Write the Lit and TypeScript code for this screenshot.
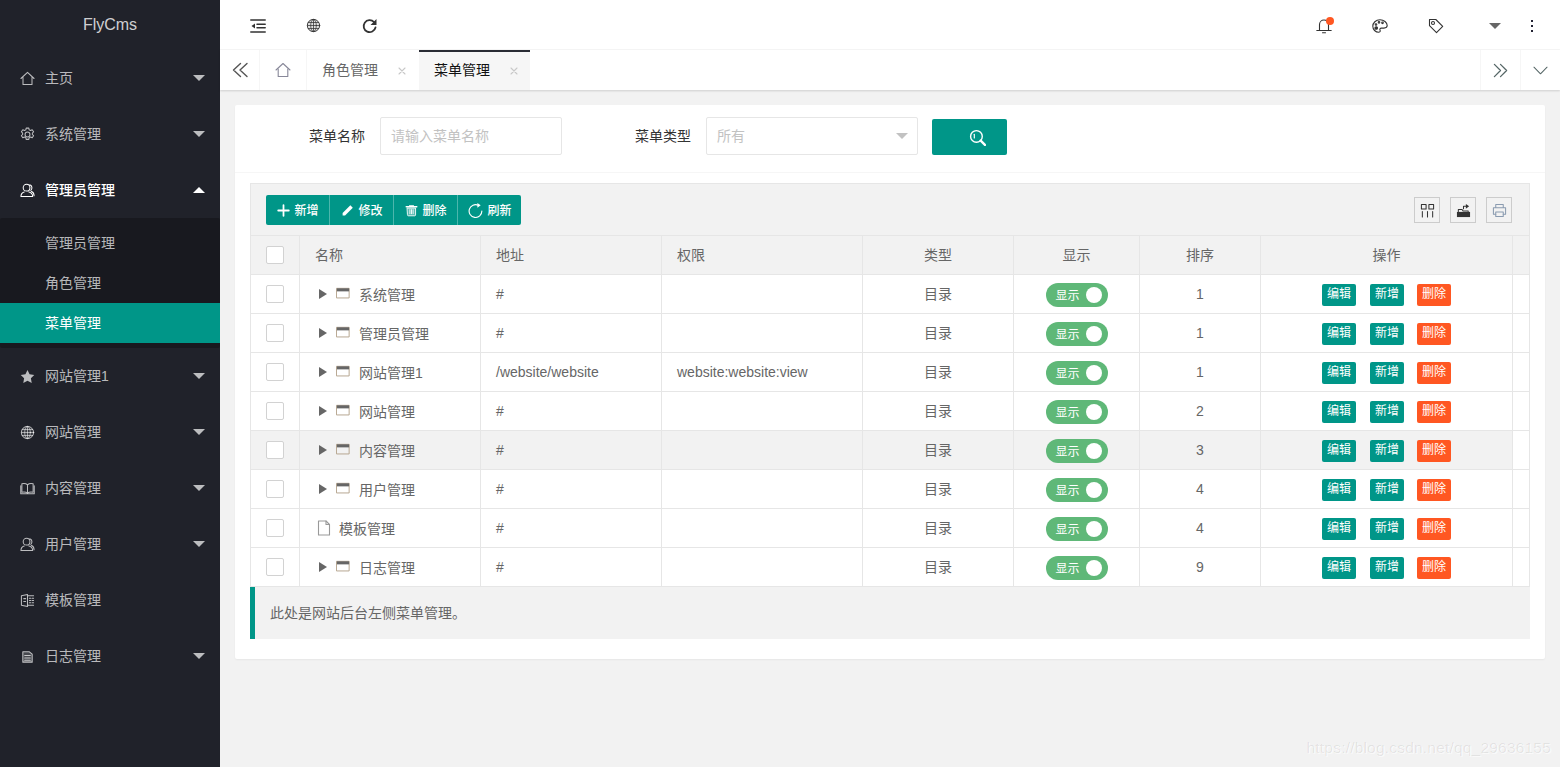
import { LitElement, html, css, svg } from "lit";
import { customElement } from "lit/decorators.js";

const ic = (size: number, body: unknown, vb = "0 0 16 16") => html`<svg class="ic" width=${size} height=${size} viewBox=${vb} fill="none" stroke="currentColor" stroke-width="1.1" stroke-linecap="round" stroke-linejoin="round">${body}</svg>`;

const icons: Record<string, unknown> = {
  home: svg`<path d="M1 8 8 1.500 15 8"/><path d="M3.200 7V14.500H12.800V7"/>`,
  gear: svg`<circle cx="8" cy="8" r="2.600"/><path d="M6.600 1.200h2.800l.4 1.900 1.500.7 1.700-.9 1.500 2.200-1.300 1.300v1.600l1.300 1.300-1.500 2.200-1.700-.9-1.500.7-.4 1.900H6.600l-.4-1.900-1.500-.7-1.700.9-1.500-2.200 1.300-1.300V6.400L1.500 5.100 3 2.900l1.700.9 1.500-.7z"/>`,
  user: svg`<circle cx="7" cy="5" r="3.600"/><path d="M4.500 9.500C2.500 10 1 11.500 1 14.500H13.500c0-3-1.500-4.500-4-5"/><path d="M10.500 2c2.500.5 3 4 1 6M12 9c2 .5 3 2.500 3 4.500"/>`,
  star: svg`<path fill="currentColor" stroke="none" d="M8 1l2.200 4.600 5 .7-3.600 3.500.9 5L8 12.400l-4.500 2.400.9-5L.8 6.300l5-.7z"/>`,
  globe: svg`<g stroke-width=".8"><circle cx="8" cy="8" r="6.600" fill="currentColor" fill-opacity=".15" stroke-width="1"/><ellipse cx="8" cy="8" rx="3" ry="6.400"/><path d="M1.600 8h12.800M2.500 4.800h11M2.500 11.200h11M8 1.600v12.800"/></g>`,
  book: svg`<path d="M8 4C6.500 2.800 4 2.600 2 3v9c2-.4 4.500-.2 6 1 1.500-1.200 4-1.400 6-1V3c-2-.4-4.500-.2-6 1zM8 4v9"/><path d="M.8 5v8.500h14.400V5"/>`,
  tpl: svg`<path d="M1.500 3 8 1.500V14.500L1.500 13zM8 3h6.500M8 13h6.500"/><path d="M4 6h2M4 9h2M10 5.500h1.500M13 5.500h1.500M10 8h1.500M13 8h1.500M10 10.500h1.500M13 10.500h1.500"/>`,
  log: svg`<path fill="currentColor" fill-opacity=".25" d="M3 3h7l3 2.500V14H3z"/><path d="M5 7h6M5 9.500h6M5 12h6"/>`,
  fold: svg`<path d="M.8 2h14.400M.8 14h14.400M7 6.200h8.200M7 9.800h8.200" stroke-width="1.500"/><path fill="currentColor" stroke="none" d="M5 5.500v5L1.500 8z"/>`,
  refresh: svg`<path d="M13.500 9.500A6 6 0 1 1 12 4" stroke-width="1.800"/><path fill="currentColor" stroke="none" d="M14.500 1v6h-6z"/>`,
  bell: svg`<path d="M3.500 12V6.500a4.500 4.500 0 0 1 9 0V12M.8 12.500h14.400M6.500 14.800h3"/>`,
  palette: svg`<path d="M8 1.800C3.800 1.800.8 4.800.8 8.300c0 3.300 2.700 5.900 6 5.900 1.700 0 1.600-1.300 1.200-2.100-.5-1 .1-2 1.300-2h2.600c1.700 0 3.300-.8 3.300-2.500 0-3.200-3.400-5.800-7.200-5.800z"/><circle cx="4" cy="6.500" r=".8"/><circle cx="7" cy="4.300" r=".8"/><circle cx="10.500" cy="4.800" r=".8"/><circle cx="4.200" cy="10" r="1.300" fill="currentColor"/>`,
  tag: svg`<path d="M1.500 1.500h6.300l6.900 6.900-6.200 6.200-7-7z"/><circle cx="5" cy="5" r="1.500"/>`,
  dl: svg`<path d="M8.500 1.500 1.500 8l7 6.500M15 1.500 8 8l7 6.500" stroke-width="1.400"/>`,
  dr: svg`<path d="M1.500 1.500 8 8l-6.500 6.500M8 1.500 14.500 8 8 14.500" stroke-width="1.400"/>`,
  down: svg`<path d="M1 4.500 8 11.500 15 4.500"/>`,
  close: svg`<path d="M1 1l6 6M7 1 1 7" stroke-width="1.100"/>`,
  search: svg`<circle cx="7" cy="7" r="5.500" stroke-width="1.300"/><path d="M11 11l4 4" stroke-width="2.200"/><path d="M5 5v3.500" />`,
  plus: svg`<path d="M8 1.500v13M1.500 8h13" stroke-width="2.200"/>`,
  pen: svg`<path fill="currentColor" stroke="none" d="M11.500 1.500 14.500 4.500 5 14H2v-3z"/>`,
  trash: svg`<path d="M1.500 3.500h13" stroke-width="1.800"/><path d="M3 5h10v8.500c0 .7-.5 1-1 1H4c-.5 0-1-.3-1-1z" fill="currentColor" fill-opacity=".35"/><path d="M6 7v5M8 7v5M10 7v5M5.500 2h5"/>`,
  redo: svg`<path d="M11 2.500a6.800 6.800 0 1 0 3.800 6" stroke-width="1.200"/><path fill="currentColor" stroke="none" d="M10 0v5l3.500-2.500z"/>`,
  cols: svg`<path d="M1.500 1.500h5v5h-5zM9.500 1.500h5v5h-5zM2.500 9v6M8 9v6M13.500 9v6"/>`,
  export: svg`<path fill="currentColor" stroke="none" d="M1 9.500h14V15H1z"/><path d="M2.500 9V7h4l1 1.500h5.500V9M8 6V3.500h3"/><path fill="currentColor" stroke="none" d="M10.500 1l3.500 2.500-3.500 2.500z"/>`,
  print: svg`<path d="M4 5V1.500h8V5M4 12H1.500V5h13v7H12"/><path d="M4 9.500h8v5H4z"/>`,
  win: svg`<path d="M1 1.500h14v11H1z" stroke="#b5a48e"/><path fill="#666" stroke="none" d="M1 1.500h14v3.500H1z"/>`,
  file: svg`<path d="M2.500 1h7.500l3.500 3.500V15h-11z"/><path d="M10 1v3.500h3.500"/>`,
};

const side = [
  ["home", "主页", 1], ["gear", "系统管理", 1], ["user", "管理员管理", 2],
  ["star", "网站管理1", 1], ["globe", "网站管理", 1], ["book", "内容管理", 1],
  ["user", "用户管理", 1], ["tpl", "模板管理", 0], ["log", "日志管理", 1],
] as const;

const rows = [
  ["系统管理", "#", "", "1"], ["管理员管理", "#", "", "1"],
  ["网站管理1", "/website/website", "website:website:view", "1"],
  ["网站管理", "#", "", "2"], ["内容管理", "#", "", "3"], ["用户管理", "#", "", "4"],
  ["模板管理", "#", "", "4"], ["日志管理", "#", "", "9"],
];

@customElement("app-root")
export class AppRoot extends LitElement {
  static styles = css`
    :host { display: flex; width: 1560px; height: 767px; overflow: hidden; position: relative; background: #f2f2f2; color: #666; font: 14px "Liberation Sans", "Noto Sans CJK SC", sans-serif; }
    * { box-sizing: border-box; }
    .ic { display: block; flex: none; }
    .side { width: 220px; background: #20222a; color: rgba(255,255,255,.7); flex: none; }
    .logo { height: 50px; line-height: 50px; text-align: center; font-size: 16px; color: rgba(255,255,255,.8); }
    .nav { height: 56px; display: flex; align-items: center; padding: 0 0 2px 20px; }
    .nav .ic { margin: 2px 10px 0 0; width: 15px; height: 15px; }
    .nav.open { color: #fff; font-weight: 500; }
    .caret { margin: 2px 15px 0 auto; width: 0; height: 0; border: 6px solid transparent; border-top-color: rgba(255,255,255,.7); border-bottom-width: 0; }
    .nav.open .caret { border-top-width: 0; border-bottom-width: 6px; border-bottom-color: #fff; }
    .sub { background: #18191f; padding: 5px 0; border-radius: 2px; }
    .sub div { height: 40px; line-height: 40px; padding-left: 45px; }
    .sub .on { background: #009688; color: #fff; }
    .main { flex: 1; min-width: 0; }
    .top { height: 50px; background: #fff; border-bottom: 1px solid #f6f6f6; padding-top: 2px; display: flex; align-items: center; color: #333; }
    .top .t { width: 16px; margin-left: 40px; }
    .top .t:first-child { margin-left: 30px; }
    .sp { flex: 1; }
    .r1 { margin-right: 40px; position: relative; color: #333; }
    .dot { position: absolute; top: -1px; right: -2px; width: 8px; height: 8px; border-radius: 50%; background: #ff5722; }
    .tcaret { width: 0; height: 0; border: 6px solid transparent; border-top-color: #666; border-bottom-width: 0; margin: 0 30px 0 5px; }
    .keb { display: flex; flex-direction: column; gap: 3px; margin-right: 27px; }
    .keb i { width: 2px; height: 2px; background: #223; display: block; }
    .tabs { height: 40px; background: #fff; display: flex; box-shadow: 0 1px 2px rgba(0,0,0,.15); position: relative; }
    .tb { width: 40px; display: flex; align-items: center; justify-content: center; border-right: 1px solid #f6f6f6; color: #555; }
    .tb.home { width: 47px; color: #889; }
    .tb.r { border-right: 0; border-left: 1px solid #f6f6f6; color: #566; }
    .tab { width: 112px; padding: 0 0 2px 15px; display: flex; align-items: center; gap: 20px; position: relative; color: #666; }
    .tab .ic { color: #c8c8c8; margin-top: 3px; }
    .tab.on { width: 111px; background: #f6f6f6; color: #111; }
    .tab.on::before { content: ""; position: absolute; left: 0; right: 0; top: 0; height: 2px; background: #292b34; }
    .card { margin: 15px 15px 0; background: #fff; border-radius: 2px; box-shadow: 0 1px 2px rgba(0,0,0,.05); padding-bottom: 20px; }
    .filter { height: 68px; border-bottom: 1px solid #f6f6f6; padding-top: 12px; display: flex; align-items: flex-start; }
    .lab { color: #333; line-height: 38px; }
    .lab.a { margin-left: 74px; margin-right: 15px; }
    .lab.b { margin-left: 73px; margin-right: 15px; }
    .inp { height: 38px; border: 1px solid #e6e6e6; border-radius: 2px; padding-left: 10px; line-height: 36px; color: #c2c2c2; position: relative; }
    .inp.n { width: 182px; }
    .inp.s { width: 212px; }
    .inp.s::after { content: ""; position: absolute; right: 9px; top: 15px; border: 6px solid transparent; border-top-color: #c2c2c2; border-bottom-width: 0; }
    .go { width: 75px; height: 36px; margin: 2px 0 0 14px; background: #009688; border-radius: 2px; color: #fff; display: flex; align-items: center; justify-content: center; padding-left: 16px; }
    .box { margin: 10px 15px 0; border: 1px solid #e6e6e6; border-bottom: 0; }
    .bar { height: 52px; background: #f2f2f2; border-bottom: 1px solid #e6e6e6; padding: 11px 17px 0 15px; display: flex; align-items: flex-start; }
    .grp { display: flex; height: 30px; border-radius: 2px; overflow: hidden; background: #009688; color: #fff; font-size: 12px; font-weight: 500; }
    .grp div { width: 64px; padding: 0 0 2px 1px; display: flex; align-items: center; justify-content: center; gap: 4px; border-right: 1px solid #4db6ac; }
    .grp div .ic { margin-top: 2px; }
    .grp div:last-child { width: 63px; border-right: 0; }
    .tool { width: 26px; height: 26px; border: 1px solid #ccc; margin: 2px 0 0 10px; display: flex; align-items: center; justify-content: center; color: #333; }
    .tool.p { color: #8a9bb0; }
    .row { display: grid; grid-template-columns: 49px 181px 181px 201px 151px 126px 121px 252px 16px; height: 39px; border-bottom: 1px solid #e6e6e6; }
    .row.head { background: #f2f2f2; }
    .row.hov { background: #f2f2f2; }
    .c { border-right: 1px solid #e6e6e6; display: flex; align-items: center; padding-left: 15px; }
    .head .c:not(:first-child) { padding-bottom: 2px; }
    .c.mid { justify-content: center; padding-left: 0; }
    .c.mu { padding-bottom: 2px; }
    .c.last { border-right: 0; background: #fff; }
    .head .c.last { background: #f2f2f2; }
    .chk { width: 18px; height: 18px; border: 1px solid #d2d2d2; border-radius: 2px; background: #fff; }
    .tri { width: 0; height: 0; border: 5px solid transparent; border-left: 8px solid #666; border-right-width: 0; margin: 0 9px 0 4px; }
    .win { margin-right: 9px; }
    .c.file { padding-left: 16px; }
    .c.file .ic { color: #999; margin-right: 7px; }
    .sw { width: 62px; height: 24px; margin-top: 2px; padding: 0 0 2px 10px; border-radius: 12px; background: #5fb878; color: #fff; font-size: 12px; display: flex; align-items: center; }
    .sw i { width: 16px; height: 16px; margin: 2px 6px 0 auto; border-radius: 50%; background: #fff; }
    .ops { gap: 14px; }
    .op { width: 34px; height: 22px; margin-top: 2px; line-height: 21px; text-align: center; font-size: 12px; color: #fff; background: #009688; border-radius: 2px; }
    .op.del { background: #ff5722; margin-left: -1px; }
    .note { margin: 0 15px; height: 52px; background: #f2f2f2; border-left: 5px solid #009688; padding-left: 15px; line-height: 52px; }
    .wm { position: absolute; right: 9px; bottom: 10px; font-size: 15.5px; color: rgba(0,0,0,.08); letter-spacing: .2px; text-shadow: 1px 1px 1px rgba(255,255,255,.7); }
  `;

  render() {
    return html`
      <aside class="side">
        <div class="logo">FlyCms</div>
        ${side.map(([i, t, k]) => html`
          <div class="nav ${k === 2 ? "open" : ""}">${ic(15, icons[i])}<span>${t}</span>${k ? html`<span class="caret"></span>` : ""}</div>
          ${k === 2 ? html`<div class="sub"><div>管理员管理</div><div>角色管理</div><div class="on">菜单管理</div></div>` : ""}
        `)}
      </aside>
      <main class="main">
        <div class="top">
          <span class="t">${ic(16, icons.fold)}</span>
          <span class="t">${ic(15, icons.globe)}</span>
          <span class="t">${ic(16, icons.refresh)}</span>
          <span class="sp"></span>
          <span class="r1">${ic(16, icons.bell)}<i class="dot"></i></span>
          <span class="r1">${ic(16, icons.palette)}</span>
          <span class="r1">${ic(16, icons.tag)}</span>
          <span class="tcaret"></span>
          <span class="keb"><i></i><i></i><i></i></span>
        </div>
        <div class="tabs">
          <div class="tb">${ic(16, icons.dl)}</div>
          <div class="tb home">${ic(16, icons.home)}</div>
          <div class="tab">角色管理${ic(8, icons.close, "0 0 8 8")}</div>
          <div class="tab on">菜单管理${ic(8, icons.close, "0 0 8 8")}</div>
          <span class="sp"></span>
          <div class="tb r">${ic(15, icons.dr)}</div>
          <div class="tb r">${ic(15, icons.down)}</div>
        </div>
        <div class="card">
          <div class="filter">
            <span class="lab a">菜单名称</span>
            <div class="inp n">请输入菜单名称</div>
            <span class="lab b">菜单类型</span>
            <div class="inp s">所有</div>
            <div class="go">${ic(17, icons.search)}</div>
          </div>
          <div class="box">
            <div class="bar">
              <div class="grp">
                <div>${ic(13, icons.plus)}新增</div>
                <div>${ic(13, icons.pen)}修改</div>
                <div>${ic(13, icons.trash)}删除</div>
                <div>${ic(15, icons.redo)}刷新</div>
              </div>
              <span class="sp"></span>
              <div class="tool">${ic(15, icons.cols)}</div>
              <div class="tool">${ic(15, icons.export)}</div>
              <div class="tool p">${ic(15, icons.print)}</div>
            </div>
            <div class="row head">
              <div class="c"><span class="chk"></span></div>
              <div class="c">名称</div><div class="c">地址</div><div class="c">权限</div>
              <div class="c mid">类型</div><div class="c mid">显示</div><div class="c mid">排序</div><div class="c mid">操作</div>
              <div class="c last"></div>
            </div>
            ${rows.map((r, i) => html`
              <div class="row ${i === 4 ? "hov" : ""}">
                <div class="c"><span class="chk"></span></div>
                ${i === 6
                  ? html`<div class="c file">${ic(16, icons.file)}${r[0]}</div>`
                  : html`<div class="c"><span class="tri"></span><span class="win">${ic(14, icons.win)}</span>${r[0]}</div>`}
                <div class="c">${r[1]}</div>
                <div class="c">${r[2]}</div>
                <div class="c mid mu">目录</div>
                <div class="c mid"><div class="sw">显示<i></i></div></div>
                <div class="c mid">${r[3]}</div>
                <div class="c mid ops"><span class="op">编辑</span><span class="op">新增</span><span class="op del">删除</span></div>
                <div class="c last"></div>
              </div>
            `)}
          </div>
          <div class="note">此处是网站后台左侧菜单管理。</div>
        </div>
      </main>
      <div class="wm">https://blog.csdn.net/qq_29636155</div>
    `;
  }
}
